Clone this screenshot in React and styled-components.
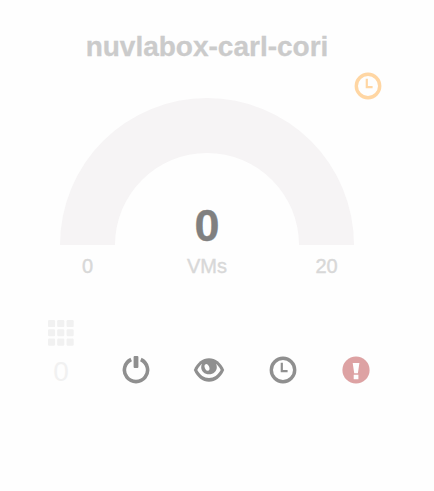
import React from 'react';
import styled, { createGlobalStyle } from 'styled-components';

const GlobalStyle = createGlobalStyle`
  body {
    margin: 0;
    background: #fefefe;
    font-family: 'Liberation Sans', Arial, sans-serif;
  }
`;

const Card = styled.main`
  position: relative;
  box-sizing: border-box;
  width: 414px;
  height: 491px;
  padding-top: 31px;
  display: flex;
  flex-direction: column;
`;

const Title = styled.h1`
  margin: 0;
  font-size: 28px;
  line-height: 32px;
  font-weight: 700;
  color: #cbcbcb;
  text-align: center;
  -webkit-text-stroke: 0.3px;
`;

const StatusBadge = styled.div`
  position: absolute;
  top: 72px;
  left: 354px;
  color: #ffd6a3;
`;

const Icon = styled.svg`
  display: block;
  width: ${({ $width = 28 }) => $width}px;
  height: 28px;
`;

const Gauge = styled.section`
  display: grid;
  width: 294px;
  margin: 35px auto 0;
`;

const Arc = styled.svg`
  grid-area: 1 / 1;
  display: block;
  width: 294px;
  height: 147px;
`;

const GaugeValue = styled.div`
  grid-area: 1 / 1;
  align-self: end;
  justify-self: center;
  font-size: 45px;
  line-height: 38px;
  font-weight: 700;
  color: #808080;
  -webkit-text-stroke: 0.3px;
`;

const Scale = styled.div`
  display: grid;
  grid-template-columns: 55px 1fr 55px;
  margin-top: 10px;
  font-size: 20px;
  line-height: 22px;
  color: #d8d8d8;
  text-align: center;
  -webkit-text-stroke: 0.4px;
`;

const Footer = styled.footer`
  display: flex;
  align-items: flex-end;
  margin: 43px 0 0 46px;
  height: 64px;
`;

const Apps = styled.div`
  width: 30px;
  height: 64px;
  display: flex;
  flex-direction: column;
  align-items: center;
  margin-right: 22.9px;
`;

const AppsIcon = styled.svg`
  display: block;
  flex: none;
  width: 26px;
  height: 26px;
`;

const Count = styled.span`
  margin-top: 10px;
  font-size: 28px;
  line-height: 32px;
  color: #f1f1f1;
`;

const Actions = styled.div`
  display: grid;
  grid-template-columns: repeat(4, 73.6px);
  justify-items: center;
`;

const Action = styled.span`
  color: ${({ $danger }) => ($danger ? '#dda2a3' : '#8f8f8f')};
`;

const Clock = () => (
  <Icon viewBox="0 0 28 28" fill="none" stroke="currentColor">
    <circle cx="14" cy="14" r="11.7" strokeWidth="3.4" />
    <path d="M12.8 6.7v8.4h5.8" strokeWidth="2.2" />
  </Icon>
);

const Power = () => (
  <Icon viewBox="0 0 28 28" fill="none" stroke="currentColor">
    <path d="M9.2 3.5a11.6 11.6 0 1 0 9.6 0" strokeWidth="3.6" />
    <rect x="11.6" y="0.1" width="4.8" height="11.9" rx="1" fill="currentColor" stroke="none" />
  </Icon>
);

const Eye = () => (
  <Icon $width={32} viewBox="0 0 32 28">
    <path
      fill="currentColor"
      d="M.8 14C4.2 6.5 9.6 2.3 16 2.3S27.8 6.5 31.2 14C27.8 21.5 22.4 25.7 16 25.7S4.2 21.5 .8 14Z"
    />
    <path
      fill="#fefefe"
      d="M4.3 14C5.6 11.3 7.1 9.3 9 7.8C8.4 9 8.2 10.1 8.2 11.2C8.2 15.3 11.6 18.3 16 18.3S23.8 15.3 23.8 11.2C23.8 10.1 23.6 9 23 7.8C24.9 9.3 26.4 11.3 27.7 14C25 19 20.9 22 16 22S7 19 4.3 14Z"
    />
    <ellipse cx="14" cy="11.4" rx="2.2" ry="3.5" transform="rotate(-22 14 11.4)" fill="#fefefe" />
  </Icon>
);

const Alert = () => (
  <Icon viewBox="0 0 28 28">
    <circle cx="14" cy="14" r="13.6" fill="currentColor" />
    <path d="M10.7 7h6.7l-1.5 10.3h-3.7Z M11.7 18.7h4.7v4.6h-4.7Z" fill="#fefefe" />
  </Icon>
);

const cells = [0, 9.2, 18.6];

export default function App() {
  return (
    <>
      <GlobalStyle />
      <Card>
        <Title>nuvlabox-carl-cori</Title>
        <StatusBadge><Clock /></StatusBadge>
        <Gauge>
          <Arc viewBox="0 0 294 147">
            <path d="M0 147a147 147 0 0 1 294 0h-55a92 92 0 0 0-184 0Z" fill="#f6f4f5" />
          </Arc>
          <GaugeValue>0</GaugeValue>
          <Scale>
            <span>0</span>
            <span>VMs</span>
            <span>20</span>
          </Scale>
        </Gauge>
        <Footer>
          <Apps>
            <AppsIcon viewBox="0 0 26 26" fill="#f1f1f1">
              {cells.map((y) => cells.map((x) => (
                <rect key={`${x}-${y}`} x={x} y={y} width="7.1" height="7.1" rx="1.2" />
              )))}
            </AppsIcon>
            <Count>0</Count>
          </Apps>
          <Actions>
            <Action><Power /></Action>
            <Action><Eye /></Action>
            <Action><Clock /></Action>
            <Action $danger><Alert /></Action>
          </Actions>
        </Footer>
      </Card>
    </>
  );
}
